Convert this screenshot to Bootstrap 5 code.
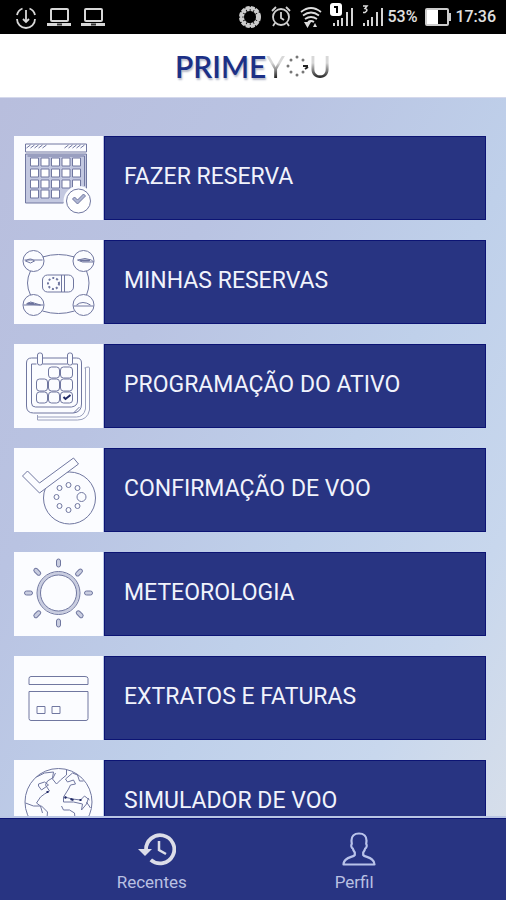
<!DOCTYPE html>
<html lang="pt-BR">
<head>
<meta charset="utf-8">
<meta name="viewport" content="width=device-width, initial-scale=1">
<title>PrimeYou</title>
<link rel="stylesheet" href="https://cdn.jsdelivr.net/npm/bootstrap@5.3.0/dist/css/bootstrap.min.css">
<style>
body { font-family: Roboto, "Liberation Sans", sans-serif; }
svg { display: block; flex: none; }
.status { height: 34px; background: #000; color: #e0e0e0; font-size: 16px; font-weight: 500; line-height: 34px; padding: 0 10px 0 14px; }
.brand-bar { height: 64px; border-bottom: 1px solid #d5d9ec; }
.logo { font-family: Lato, "Open Sans", sans-serif; font-size: 30px; line-height: 60px; color: #1c3086; text-shadow: 1px 2px 2px #b4b8c8; }
.logo b { font-weight: 600; }
.logo .you { color: transparent; background: linear-gradient(#d8d8d8 45%, #222 70%); -webkit-background-clip: text; background-clip: text; text-shadow: none; }
.menu-area { background: linear-gradient(120deg, #b8bedd 0%, #b9c3e2 30%, #bfd0ea 60%, #c8d7ed 82%, #d6deea 100%); padding: 38px 20px 0 14px; min-height: 0; }
.menu-list { gap: 20px; }
.menu-item { gap: 1px; height: 84px; color: #f1f3fc; font-size: 23px; line-height: 28px; }
.thumb { width: 89px; background: #fbfcff; }
.thumb svg { fill: none; stroke: #7077a0; stroke-width: 1; }
.caption-box { background: #283482; border: 1px solid #0c1474; padding: 0 20px 2px 19px; }
.tabs { height: 84px; background: #283482; border-top: 2px solid #b9c5e4; box-shadow: inset 0 1px #0c1474; }
.tab { width: 40%; color: #b9c0e2; font-size: 17px; line-height: 20px; padding-top: 14px; }
.tab svg { margin-left: 10px; margin-bottom: 6px; }
</style>
</head>
<body class="vh-100 d-flex flex-column overflow-hidden">

<div class="status d-flex align-items-center flex-shrink-0">
    <svg class="me-2" width="24" height="24" viewBox="0 0 24 24" fill="none" stroke="#d8d8d8" stroke-width="1.8"><path d="M8.500 3.500A9 9 0 0 0 3 10M3 14a9 9 0 0 0 18 0M21 10a9 9 0 0 0-5.500-6.500M12 5v12M9 14l3 3 3-3"/></svg>
    <svg class="me-2" width="26" height="24" viewBox="0 0 26 24" fill="none" stroke="#d8d8d8" stroke-width="2"><rect x="5" y="4" width="17" height="12" rx="1"/><path d="M1 19.500h24" stroke-width="3"/><path d="M11 19.500h5" stroke="#333"/></svg>
    <svg class="me-auto" width="26" height="24" viewBox="0 0 26 24" fill="none" stroke="#d8d8d8" stroke-width="2"><rect x="5" y="4" width="17" height="12" rx="1"/><path d="M1 19.500h24" stroke-width="3"/><path d="M11 19.500h5" stroke="#333"/></svg>
    <svg class="me-2" width="24" height="24" viewBox="0 0 24 24" fill="none" stroke="#ccc"><circle cx="12" cy="12" r="8.500" stroke-width="5" stroke-dasharray="3.500 1"/><circle cx="12" cy="12" r="9" stroke-width="2"/></svg>
    <svg class="me-2" width="22" height="24" viewBox="0 0 22 24" fill="none" stroke="#d0d0d0" stroke-width="1.800"><circle cx="11" cy="12" r="8"/><path d="M11 7v6l3 2M2 6l4-4M20 6l-4-4M5 18l-2 3M17 18l2 3"/></svg>
    <svg class="me-2" width="22" height="24" viewBox="0 0 22 24" fill="none" stroke="#ddd" stroke-width="1.800"><path d="M1 7q10-8 20 0M3 10.500q8-6 16 0M5 14q6-4 12 0M8 17q3-2 6 0"/><path d="M4 17h7l-3.500 6zM13 22l2-4 2 4z" fill="#ddd" stroke="none"/></svg>
    <svg class="me-2" width="24" height="28" viewBox="0 0 24 28" fill="#d4d4d4"><rect width="12" height="13" rx="3" fill="#fff"/><path d="M4 4h3v6" fill="none" stroke="#000" stroke-width="2"/><path d="M3 20h2v3H3zM7 17h2v6H7zM11 15h2v8h-2zM16 9h2v14h-2zM21 5h2v18h-2z"/></svg>
    <svg class="me-1" width="21" height="28" viewBox="0 0 21 28" fill="#d4d4d4"><path d="M1 3h4L3 5.500q4 1 0 4H1" fill="none" stroke="#ddd" stroke-width="1.500"/><path d="M1 20h2v3H1zM5 17h2v6H5zM9 14h2v9H9zM14 9h2v14h-2zM19 5h2v18h-2z"/></svg>
    <span class="me-2">53%</span>
    <svg class="me-1" width="26" height="18" viewBox="0 0 26 18"><rect x="1" y="1" width="22" height="16" rx="1" fill="none" stroke="#ccc" stroke-width="2"/><path fill="#fff" d="M2 2h11v14H2z"/><path fill="#ccc" d="M24 5h2v8h-2z"/></svg>
    <span>17:36</span>
</div>

<header class="brand-bar bg-white d-flex justify-content-center flex-shrink-0">
  <div class="logo d-flex align-items-center"><b>PRIME</b><span class="you">Y</span><svg width="24" height="24" viewBox="0 0 24 24" fill="#777"><circle cx="12" cy="3" r="1.500"/><circle cx="18" cy="6" r="1.500"/><path d="M18 12h5M20 15l3-2" stroke="#222" stroke-width="2"/><circle cx="18" cy="18" r="1.500"/><circle cx="12" cy="21" r="1.500"/><circle cx="6" cy="18" r="1.500"/><circle cx="3" cy="12" r="1.500"/><circle cx="6" cy="6" r="1.500"/></svg><span class="you">U</span></div>
</header>

<main class="menu-area flex-grow-1 overflow-hidden">
  <nav class="menu-list d-flex flex-column" aria-label="Menu">
    <a href="#reserva" class="menu-item d-flex text-decoration-none">
      <span class="thumb"><svg width="89" height="84" viewBox="0 0 88 84"><path d="M11 16V8h61v8zM12 12l4-3m0 3l4-3m0 3l4-3m0 3l4-3m0 3l4-3m18 3l4-3m0 3l4-3m0 3l4-3m0 3l4-3m0 3l4-3" /><path d="M11 18h61v36l-6-2-10 3-7 12H11z" fill="#c3c8e0"/><path d="M13 20h57v30" /><g fill="#fff"><path d="M16 22h8v8h-8zM26.500 22h8v8h-8zM37 22h8v8h-8zM47.500 22h8v8h-8zM58 22h8v8h-8zM16 33h8v8h-8zM26.500 33h8v8h-8zM37 33h8v8h-8zM47.500 33h8v8h-8zM58 33h8v8h-8zM16 44h8v8h-8zM26.500 44h8v8h-8zM37 44h8v8h-8zM47.500 44h8v8h-8zM58 44h8v8h-8zM16 54h8v8h-8zM26.500 54h8v8h-8zM37 54h8v8h-8z"/></g><circle cx="64" cy="65" r="15" fill="#fbfcff" stroke="none"/><circle cx="64" cy="65" r="12" fill="#fff"/><path d="M58 63l2-2 3 3 6-6 2 2-8 8z" fill="#aeb5d2"/></svg></span>
      <span class="caption-box flex-grow-1 d-flex align-items-center">FAZER RESERVA</span>
    </a>
    <a href="#minhas" class="menu-item d-flex text-decoration-none">
      <span class="thumb"><svg width="89" height="84" viewBox="0 0 88 84"><path d="M28 17q16-5 32 0M28 71q16 5 32 0M16 31q-6 12 0 24M72 31q5 12 0 24"/><circle cx="19" cy="21" r="10.500"/><circle cx="69" cy="21" r="10.500"/><circle cx="19" cy="65" r="10.500"/><circle cx="69" cy="65" r="10.500"/><path d="M10 20h18M11 21q5-4 9 0l-4 2zM79 22H68l-5-2q8-3 14 0zM9 65h20M12 64l4-2 10 3zM59 66h20M62 65q6-5 14 0"/><path d="M66 20h9v1h-9zM13 63h6v1h-6z" fill="#5e6690"/><rect x="28" y="35" width="31" height="17" rx="5"/><path d="M47 35v17M50 35v17"/><circle cx="39" cy="43.500" r="5.500" stroke-width="2" stroke-dasharray="2 2"/></svg></span>
      <span class="caption-box flex-grow-1 d-flex align-items-center">MINHAS RESERVAS</span>
    </a>
    <a href="#programacao" class="menu-item d-flex text-decoration-none">
      <span class="thumb"><svg width="89" height="84" viewBox="0 0 88 84"><path d="M23 14h-6q-5 0-5 5v43q0 7 7 7h40q8-1 8-9V19q0-5-5-5h-4M28 14h25M22 20h-5v39q0 4 4 4h36q6-1 6-6V20h-5M28 20h25M59 69l6-6"/><rect x="23" y="9" width="5" height="12" rx="2"/><rect x="53" y="9" width="5" height="12" rx="2"/><path d="M70 24q5-2 5 0v42q-2 10-12 10H23v-5M71 24v41q-2 8-9 8H23" stroke="#9aa0bd"/><g><rect x="34" y="23" width="11" height="11" rx="3"/><rect x="46" y="23" width="12" height="11" rx="3"/><rect x="22" y="35" width="11" height="12" rx="3"/><rect x="34" y="35" width="11" height="12" rx="3"/><rect x="46" y="35" width="12" height="12" rx="3"/><rect x="22" y="48" width="11" height="11" rx="3"/><rect x="34" y="48" width="11" height="11" rx="3"/><rect x="46" y="48" width="12" height="11" rx="3"/></g><path d="M49 53l2 2 5-4" stroke="#202966" stroke-width="2"/></svg></span>
      <span class="caption-box flex-grow-1 d-flex align-items-center">PROGRAMAÇÃO DO ATIVO</span>
    </a>
    <a href="#confirmacao" class="menu-item d-flex text-decoration-none">
      <span class="thumb"><svg width="89" height="84" viewBox="0 0 88 84"><circle cx="55" cy="50" r="26"/><path d="M8 28l5-5 12 12 34-25 5 6-39 29z" fill="#fbfcff"/><circle cx="54" cy="37" r="2.500"/><circle cx="63" cy="40" r="2.500"/><circle cx="67" cy="49" r="4.500"/><circle cx="63" cy="58" r="2.500"/><circle cx="54" cy="62" r="2.500"/><circle cx="45" cy="58" r="2.500"/><circle cx="42" cy="49" r="2.500"/><circle cx="45" cy="40" r="2.500"/></svg></span>
      <span class="caption-box flex-grow-1 d-flex align-items-center">CONFIRMAÇÃO DE VOO</span>
    </a>
    <a href="#meteorologia" class="menu-item d-flex text-decoration-none">
      <span class="thumb"><svg width="89" height="84" viewBox="0 0 88 84"><circle cx="44" cy="41" r="19.500" stroke="#c9cde0" stroke-width="3"/><circle cx="44" cy="41" r="21.500"/><circle cx="44" cy="41" r="18"/><g fill="#c9cde0"><rect x="42" y="7" width="4" height="8" rx="2"/><rect x="42" y="67" width="4" height="8" rx="2"/><rect x="10" y="39" width="8" height="4" rx="2"/><rect x="70" y="39" width="8" height="4" rx="2"/><g transform="rotate(45 44 41)"><rect x="42" y="8" width="4" height="8" rx="2"/><rect x="42" y="67" width="4" height="8" rx="2"/><rect x="10" y="39" width="8" height="4" rx="2"/><rect x="70" y="39" width="8" height="4" rx="2"/></g></g></svg></span>
      <span class="caption-box flex-grow-1 d-flex align-items-center">METEOROLOGIA</span>
    </a>
    <a href="#extratos" class="menu-item d-flex text-decoration-none">
      <span class="thumb"><svg width="89" height="84" viewBox="0 0 88 84"><path d="M14.500 28.500v-6q0-2 2-2h54q3 0 3 2v6zM14.500 35.500h59v27q0 2-2 2h-55q-2 0-2-2zM22.500 50.500h8v7h-8zM37.500 50.500h8v7h-8z"/></svg></span>
      <span class="caption-box flex-grow-1 d-flex align-items-center">EXTRATOS E FATURAS</span>
    </a>
    <a href="#simulador" class="menu-item d-flex text-decoration-none">
      <span class="thumb"><svg width="89" height="84" viewBox="0 0 88 84"><circle cx="44" cy="42" r="33.500"/><path d="M22 17l8-4 9-1-1 6-5 3-2 4 4 6-5 3-4 3-4 6 4 3 2 7M24 24l6-2 4 3-7 5-3-4zM11 43l8 3 8 0 6 6-1 12-6 6M41 13l-3 6 4 5 4-4 6-5 0-5M58 13l-7 6 2 3 6-2 2 4-5 1-2 4-5 8 0 5 10 0 9 2-1 6 5-6 2-6M50 37l8 2 8 1 4-4 5 4M58 13l5 2 2 6 4 0M47 46l2 4 6 0 5 3 1 11M72 42l4 6"/><path d="M50 38l2-1M56 39l3 1M65 40h2M33 31v2" stroke="#202966" stroke-width="2"/></svg></span>
      <span class="caption-box flex-grow-1 d-flex align-items-center">SIMULADOR DE VOO</span>
    </a>
  </nav>
</main>

<nav class="tabs d-flex justify-content-center flex-shrink-0" aria-label="Navegação inferior">
  <a href="#recentes" class="tab d-flex flex-column align-items-center text-decoration-none">
    <svg width="38" height="34" viewBox="0 0 38 34"><path d="M7 18A15 15 0 1 1 12 28.500" fill="none" stroke="#dcdde8" stroke-width="4" transform="translate(1.500 1) scale(.94)"/><path d="M0 17h14l-7 7z" fill="#dcdde8"/><path d="M21 9v9l7 4" fill="none" stroke="#dcdde8" stroke-width="2.500"/></svg>
    Recentes
  </a>
  <a href="#perfil" class="tab d-flex flex-column align-items-center text-decoration-none">
    <svg width="34" height="34" viewBox="0 0 34 34" fill="none" stroke="#b9c3ea" stroke-width="2.200" stroke-linejoin="round"><path d="M17 1.500c-5 0-7.500 3-7.500 7 0 1.500.3 2.500.3 3.500-1.200 1-.3 4 1 4.500.5 2 1.500 3 2 4v2.500C11 25.500 1.500 25 1.500 32.500h31c0-7.500-9.500-7-11.300-9.500v-2.500c.5-1 1.500-2 2-4 1.300-.5 2.200-3.500 1-4.500 0-1 .3-2 .3-3.500 0-4-2.500-7-7.500-7z"/></svg>
    Perfil
  </a>
</nav>
<script src="https://cdn.jsdelivr.net/npm/bootstrap@5.3.0/dist/js/bootstrap.bundle.min.js"></script>
</body>
</html>
